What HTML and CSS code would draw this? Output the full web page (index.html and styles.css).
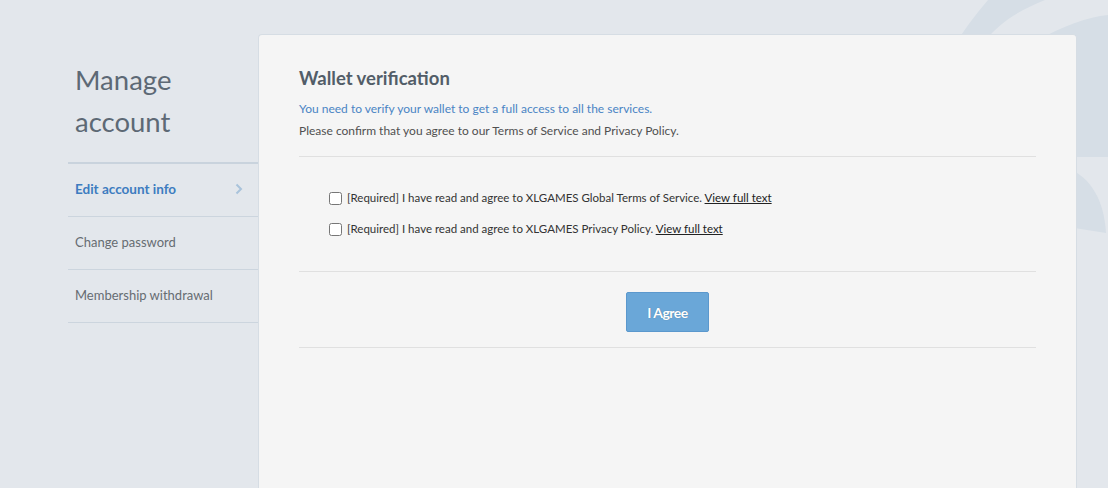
FILE: index.html
```html
<!DOCTYPE html>
<html>
<head>
<meta charset="utf-8">
<link rel="stylesheet" href="styles.css">
</head>
<body>
<svg class="bg-deco" width="200" height="488" viewBox="0 0 200 488">
  <path d="M50 40 C 60 24, 70 12, 80 0 L 137 0 C 112 10, 92 22, 78 40 Z" fill="#d6dee6"/>
  <path d="M130 40 C 155 26, 180 17, 200 15 L 200 157 L 160 157 L 160 40 Z" fill="#d6dee6"/>
  <path d="M160 168 C 183 178, 196 200, 198 233 L 160 227 Z" fill="#d6dee6"/>
</svg>
<div class="page">
  <aside class="sidebar">
    <h1 class="side-title">Manage<br>account</h1>
    <nav class="menu">
      <a class="menu-item active">Edit account info
        <svg class="chev" width="8" height="12" viewBox="0 0 8 12"><path d="M1.5 1.5 L6 6 L1.5 10.5" fill="none" stroke="#a9c3db" stroke-width="2"/></svg>
      </a>
      <a class="menu-item">Change password</a>
      <a class="menu-item">Membership withdrawal</a>
    </nav>
  </aside>
  <main class="card">
    <section class="intro">
      <h2 class="title">Wallet verification</h2>
      <p class="lead">You need to verify your wallet to get a full access to all the services.</p>
      <p class="note">Please confirm that you agree to our Terms of Service and Privacy Policy.</p>
    </section>
    <section class="terms">
      <label class="term"><input type="checkbox" class="cb"><span>[Required] I have read and agree to XLGAMES Global Terms of Service. <a class="full">View full text</a></span></label>
      <label class="term"><input type="checkbox" class="cb"><span>[Required] I have read and agree to XLGAMES Privacy Policy. <a class="full">View full text</a></span></label>
    </section>
    <div class="actions">
      <button class="agree">I Agree</button>
    </div>
  </main>
</div>
</body>
</html>
```
FILE: styles.css
```css
html, body {
  margin: 0;
  padding: 0;
}
body {
  background: #e3e7ec;
  font-family: "Lato", "Noto Sans", sans-serif;
  width: 1108px;
  height: 488px;
  overflow: hidden;
  position: relative;
}
.bg-deco {
  position: absolute;
  right: 0;
  top: 0;
}
.page {
  position: relative;
  display: flex;
  padding: 34px 0 0 68px;
  height: 454px;
}
.sidebar {
  width: 190px;
  flex: none;
}
.side-title {
  margin: 0;
  padding: 25px 0 19px 7px;
  font-weight: normal;
  font-size: 27.5px;
  line-height: 42px;
  color: #5d6975;
  border-bottom: 2px solid #c9d3dd;
}
.menu {
  display: flex;
  flex-direction: column;
}
.menu-item {
  box-sizing: border-box;
  display: flex;
  align-items: center;
  justify-content: space-between;
  height: 53px;
  padding: 0 15px 2px 7px;
  border-bottom: 1px solid #ccd5de;
  font-size: 13px;
  color: #666c72;
}
.menu-item.active {
  color: #3d7cc0;
  font-size: 13.5px;
  font-weight: bold;
}
.card {
  width: 737px;
  flex: none;
  background: #f5f5f5;
  border: 1px solid #d6dde4;
  border-bottom: none;
  border-radius: 4px 4px 0 0;
  padding: 0 40px 0 40px;
}
.intro {
  padding: 31px 0 14px;
  border-bottom: 1px solid #e0e0e0;
}
.title {
  margin: 0 0 8px;
  font-size: 18.5px;
  line-height: 24px;
  font-weight: bold;
  color: #525d68;
}
.lead, .note {
  margin: 0;
  font-size: 12px;
  line-height: 22px;
  color: #505050;
}
.lead {
  color: #4a84c4;
}
.terms {
  padding: 31px 0 32px 30px;
  border-bottom: 1px solid #e0e0e0;
  display: flex;
  flex-direction: column;
  gap: 11px;
}
.term {
  display: flex;
  align-items: center;
  font-size: 11.5px;
  line-height: 20px;
  color: #333;
}
.cb {
  margin: 0 5px 0 0;
  width: 13px;
  height: 13px;
}
.full {
  color: #222;
  text-decoration: underline;
}
.actions {
  display: flex;
  justify-content: center;
  padding: 20px 0 15px;
  border-bottom: 1px solid #e0e0e0;
}
.agree {
  width: 83px;
  height: 40px;
  background: #6aa7d8;
  border: 1px solid #5b98cd;
  border-radius: 2px;
  color: #fff;
  font-family: "Lato", "Noto Sans", sans-serif;
  font-weight: bold;
  font-size: 14px;
  letter-spacing: -0.5px;
  text-shadow: 0 0 1px rgba(0,0,0,0.3);
}
```
